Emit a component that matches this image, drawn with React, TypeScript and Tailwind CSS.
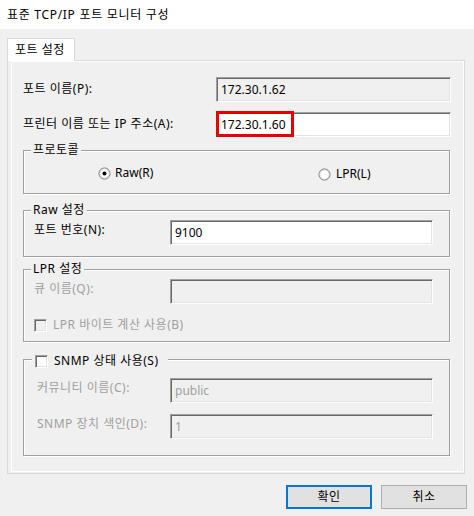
import React from 'react';

// Windows classic sunken edit border (WS_EX_CLIENTEDGE)
const sunken =
  'border border-t-[#a0a0a0] border-l-[#a0a0a0] border-b-white border-r-white shadow-[inset_1px_1px_0_#696969,inset_-1px_-1px_0_#e3e3e3]';

const etched = 'border border-[#a0a0a0] shadow-[inset_1px_1px_0_white,1px_1px_0_white]';

// Hangul in Noto CJK runs a bit narrower than Malgun Gothic, so labels get a little tracking
const ko = 'tracking-[0.5px]';

interface FieldProps {
  value?: string;
  width: number;
  gray?: boolean;
  disabled?: boolean;
  children?: React.ReactNode;
}

const Field: React.FC<FieldProps> = ({ value, width, gray, disabled, children }) => (
  <div
    className={`relative h-[25px] flex items-center pl-[4px] leading-[16px] ${sunken} ${
      gray ? 'bg-[#f0f0f0]' : 'bg-white'
    } ${disabled ? 'text-[#a0a0a0]' : 'text-black'}`}
    style={{ width }}
  >
    {value}
    {children}
  </div>
);

const GroupBox: React.FC<{ label?: string; height: number; children?: React.ReactNode; header?: React.ReactNode }> = ({
  label,
  height,
  children,
  header,
}) => (
  <div className={`relative w-[427px] ml-[11px] ${etched}`} style={{ height }}>
    {label && (
      <div className={`absolute -top-[9px] left-[7px] px-[2px] bg-[#f0f0f0] leading-[16px] ${ko}`}>{label}</div>
    )}
    {header}
    {children}
  </div>
);

const Radio: React.FC<{ checked?: boolean }> = ({ checked }) => (
  <svg width="13" height="13" viewBox="0 0 13 13" className="shrink-0">
    <circle cx="6.5" cy="6.5" r="5.5" fill="white" stroke="#6e6e6e" strokeWidth="1" />
    <circle cx="6.5" cy="6.5" r="4.5" fill="none" stroke="#e3e3e3" strokeWidth="1" />
    {checked && <circle cx="6.5" cy="6.5" r="2" fill="#000" />}
  </svg>
);

const CheckBox: React.FC<{ disabled?: boolean }> = ({ disabled }) => (
  <div className={`w-[13px] h-[13px] shrink-0 ${sunken} ${disabled ? 'bg-[#f0f0f0]' : 'bg-white'}`} />
);

export default function App() {
  return (
    <div className="w-[474px] h-[516px] bg-[#f0f0f0] text-[12px] text-black font-['Noto_Sans','Noto_Sans_CJK_KR',sans-serif] overflow-hidden">
      {/* Title bar */}
      <div className={`h-[29px] bg-white flex items-center pl-[7px] leading-[16px] tracking-[0.7px]`}>
        표준 TCP/IP 포트 모니터 구성
      </div>

      {/* Tab control */}
      <div className="pl-[7px] pt-[9px]">
        <div
          className={`relative z-10 -mb-px w-[68px] h-[23px] bg-white border border-b-0 border-[#d9d9d9] flex items-center pl-[7px] leading-[16px] ${ko}`}
        >
          포트 설정
        </div>
        <div className="w-[458px] h-[414px] border border-[#d9d9d9] pl-[3px] pb-[1px]">
          <div className="h-full border border-white flex flex-col">
            {/* Port name */}
            <div className="flex items-center mt-[15px] pl-[11px]">
              <span className={`w-[193px] leading-[16px] -mt-[2px] ${ko}`}>포트 이름(P):</span>
              <Field value="172.30.1.62" width={235} gray />
            </div>

            {/* Printer name or IP */}
            <div className="flex items-center mt-[10px] pl-[11px]">
              <span className={`w-[193px] leading-[16px] -mt-[2px] ${ko}`}>프린터 이름 또는 IP 주소(A):</span>
              <Field value="172.30.1.60" width={235}>
                <div className="absolute -left-px -top-[2px] w-[78px] h-[26px] border-[3px] border-[#e60000]" />
              </Field>
            </div>

            {/* Protocol */}
            <div className="mt-[13px]">
              <GroupBox label="프로토콜" height={44}>
                <div className="flex pt-[13px]">
                  <div className="flex items-center gap-[4px] ml-[74px] w-[220px] leading-[16px]">
                    <Radio checked />
                    <span>Raw(R)</span>
                  </div>
                  <div className="flex items-center gap-[5px] mt-[2px] leading-[16px]">
                    <Radio />
                    <span>LPR(L)</span>
                  </div>
                </div>
              </GroupBox>
            </div>

            {/* Raw settings */}
            <div className="mt-[16px]">
              <GroupBox label="Raw 설정" height={47}>
                <div className="flex items-center pl-[10px] pt-[9px]">
                  <span className={`w-[136px] leading-[16px] -mt-[6px] ${ko}`}>포트 번호(N):</span>
                  <Field value="9100" width={263} />
                </div>
              </GroupBox>
            </div>

            {/* LPR settings */}
            <div className="mt-[12px]">
              <GroupBox label="LPR 설정" height={73}>
                <div className="flex items-center pl-[10px] pt-[9px]">
                  <span className={`w-[136px] leading-[16px] -mt-[6px] text-[#a0a0a0] ${ko}`}>큐 이름(Q):</span>
                  <Field width={263} gray disabled />
                </div>
                <div className={`flex items-center gap-[6px] pl-[10px] mt-[13px] leading-[16px] text-[#a0a0a0] ${ko}`}>
                  <CheckBox disabled />
                  <span>LPR 바이트 계산 사용(B)</span>
                </div>
              </GroupBox>
            </div>

            {/* SNMP */}
            <div className="mt-[17px]">
              <GroupBox
                height={97}
                header={
                  <div
                    className={`absolute -top-[7px] left-[8px] w-[136px] pl-[3px] bg-[#f0f0f0] flex items-center gap-[6px] leading-[16px] ${ko}`}
                  >
                    <CheckBox />
                    <span>SNMP 상태 사용(S)</span>
                  </div>
                }
              >
                <div className="flex items-center pl-[13px] pt-[18px]">
                  <span className={`w-[133px] leading-[16px] -mt-[6px] text-[#a0a0a0] ${ko}`}>커뮤니티 이름(C):</span>
                  <Field value="public" width={263} gray disabled />
                </div>
                <div className="flex items-center pl-[13px] mt-[11px]">
                  <span className={`w-[133px] leading-[16px] -mt-[6px] text-[#a0a0a0] ${ko}`}>SNMP 장치 색인(D):</span>
                  <Field value="1" width={263} gray disabled />
                </div>
              </GroupBox>
            </div>
          </div>
        </div>
      </div>

      {/* Dialog buttons */}
      <div className="flex justify-end gap-[9px] pr-[7px] mt-[11px]">
        <button className={`w-[86px] h-[24px] bg-[#e1e1e1] border-2 border-[#0078d7] leading-[16px] ${ko}`}>확인</button>
        <button className={`w-[86px] h-[24px] bg-[#e1e1e1] border border-[#adadad] leading-[16px] ${ko}`}>취소</button>
      </div>
    </div>
  );
}
